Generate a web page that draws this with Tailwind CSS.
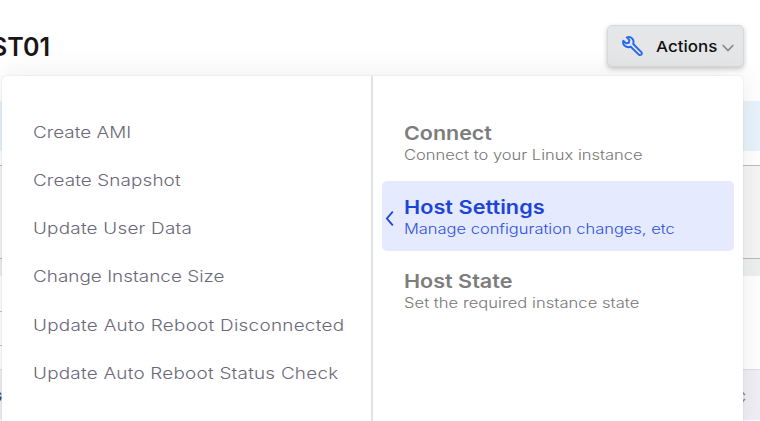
<!DOCTYPE html>
<html lang="en">
<head>
<meta charset="utf-8">
<title>Host actions</title>
<script src="https://cdn.jsdelivr.net/npm/@tailwindcss/browser@4"></script>
</head>
<body class="h-[421px] w-[760px] overflow-hidden bg-white font-['Inter',sans-serif]">
<div class="relative flex h-[421px] w-[760px] flex-col overflow-hidden">
  <header class="flex h-[101px] shrink-0 items-start justify-between pr-4 pt-[25px]">
    <h1 class="-ml-[9px] mt-[5px] text-[25px] leading-[34px] font-semibold text-[#171717]">ST01</h1>
    <button class="flex h-[42px] w-[137px] items-center rounded-[5px] border border-[#d6d8da] bg-[#e4e6e8] pl-[14px] text-left shadow-[0_2px_5px_rgba(0,0,0,0.22)]">
      <svg class="h-[21px] w-[21px] shrink-0" viewBox="0 0 21 21" fill="none" stroke="#2468f2" stroke-width="1.9" stroke-linejoin="round"><path d="M4.8 1.4Q8.2.3 10.3 2.7Q12.2 5 11.2 8L19.6 16.4Q20.2 17.6 19.3 18.6Q18.3 19.5 17.1 18.9L8.7 10.7Q5.4 12 2.7 9.8Q.4 7.8 1.3 4.8L4.1 7.4L6.8 6.8L7.4 4.1Z"/></svg>
      <span class="ml-[13px] mt-[1px] w-[62px] shrink-0"><span class="inline-block origin-left scale-x-[1.13] text-[15px] font-medium text-[#111]">Actions</span></span>
      <svg class="ml-[4px] mt-[4px] h-2 w-3 shrink-0" viewBox="0 0 12 8" fill="none" stroke="#85888d" stroke-width="1.7"><path d="M.7 1L6 6.5L11.3 1"/></svg>
    </button>
  </header>
  <div class="h-[50px] shrink-0 bg-[#e8f3fb]"></div>
  <div class="h-[15px] shrink-0 border-b border-[#bcbcbc]"></div>
  <div class="h-[93px] shrink-0 border-b border-[#b9b9b9] bg-[#f5f5f5]"></div>
  <div class="h-[17px] shrink-0 bg-[#eeefef]"></div>
  <div class="flex h-[94px] shrink-0 flex-col border-b border-[#dedee4]">
    <div class="h-[36px] w-[20px] border-b border-[#c4c4c4]"></div>
    <div class="h-[34px] w-[20px] border-b border-[#c4c4c4]"></div>
  </div>
  <div class="flex h-[50px] shrink-0 items-center justify-between bg-[#efeff5] pr-[14px]">
    <span class="-ml-[9px] mt-1 text-[15px] font-semibold text-[#4a4660]">G</span>
    <svg class="mt-1 h-[14px] w-[8px]" viewBox="0 0 8 14" fill="none" stroke="#8f9094" stroke-width="1.6"><path d="M1 5L4 2L7 5M1 9L4 12L7 9"/></svg>
  </div>

  <section class="absolute left-[2px] top-[76px] flex h-[360px] w-[741px] rounded-[5px] bg-white shadow-[0_0_32px_rgba(0,0,0,0.08),0_0_2px_rgba(0,0,0,0.12)]">
    <ul class="flex w-[371px] shrink-0 flex-col border-r-2 border-[#e2e2e2] pl-[31px] pt-[31.8px] text-[16px] leading-[48px] text-[#6b6778] font-light">
      <li class="h-[48.2px]"><span class="inline-block origin-left scale-x-[1.18]">Create AMI</span></li>
      <li class="h-[48.2px]"><span class="inline-block origin-left scale-x-[1.18] tracking-[0.1px]">Create Snapshot</span></li>
      <li class="h-[48.2px]"><span class="inline-block origin-left scale-x-[1.18] tracking-[0.19px]">Update User Data</span></li>
      <li class="h-[48.2px]"><span class="inline-block origin-left scale-x-[1.18] tracking-[0.02px]">Change Instance Size</span></li>
      <li class="h-[48.2px]"><span class="inline-block origin-left scale-x-[1.18] tracking-[0.23px]">Update Auto Reboot Disconnected</span></li>
      <li class="h-[48.2px]"><span class="inline-block origin-left scale-x-[1.18] tracking-[0.2px]">Update Auto Reboot Status Check</span></li>
    </ul>
    <div class="flex grow flex-col whitespace-nowrap px-[9px] pt-[30px]">
      <div class="h-[75px] pl-[22px] pt-[16px]">
        <div class="text-[19px] leading-[23px] font-semibold text-[#7d7d7d]"><span class="inline-block origin-left scale-x-[1.13]">Connect</span></div>
        <div class="text-[14px] leading-[20px] font-light text-[#767676]"><span class="inline-block origin-left scale-x-[1.18]">Connect to your Linux instance</span></div>
      </div>
      <div class="flex h-[70px] rounded-[5px] bg-[#e5eaff] pl-[3px] pt-[15px]">
        <svg class="mr-[10px] mt-[15px] h-[15px] w-[9px] shrink-0" viewBox="0 0 9 15" fill="none" stroke="#1d44d8" stroke-width="1.8"><path d="M7.8.6L1.9 7.5L7.8 14.4"/></svg>
        <div>
          <div class="text-[19px] leading-[23px] font-semibold text-[#1d44d8]"><span class="inline-block origin-left scale-x-[1.14] tracking-[0.03px]">Host Settings</span></div>
          <div class="text-[14px] leading-[20px] font-light text-[#2c50dc]"><span class="inline-block origin-left scale-x-[1.176]">Manage configuration changes, etc</span></div>
        </div>
      </div>
      <div class="mt-[3px] h-[70px] pl-[22px] pt-[16px]">
        <div class="text-[19px] leading-[23px] font-semibold text-[#7d7d7d]"><span class="inline-block origin-left scale-x-[1.135]">Host State</span></div>
        <div class="text-[14px] leading-[20px] font-light text-[#767676]"><span class="inline-block origin-left scale-x-[1.18] tracking-[0.05px]">Set the required instance state</span></div>
      </div>
    </div>
  </section>
</div>
</body>
</html>
